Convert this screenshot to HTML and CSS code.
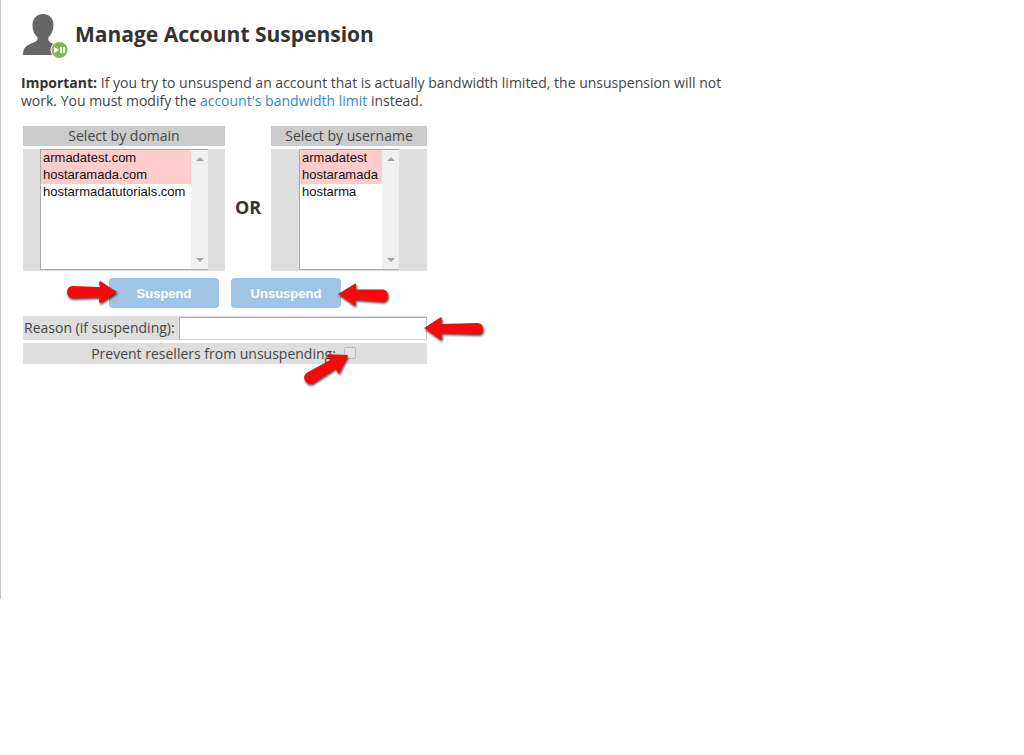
FILE: index.html
```html
<!DOCTYPE html>
<html lang="en">
<head>
  <meta charset="UTF-8">
  <meta name="viewport" content="width=device-width, initial-scale=1.0">
  <title>Manage Account Suspension</title>
  <link rel="stylesheet" href="styles.css">
</head>
<body>
  <main class="content">
    <header class="page-header">
      <svg class="page-icon" width="46" height="46" viewBox="0 0 46 46" aria-hidden="true">
        <path fill="#666" d="M21 1c7 0 11 5 10.500 12-.3 5-2.500 9-5 11.500-.6 3 .5 4.500 3.500 5.700 7 2.800 11 4 11.500 11.800H1c0-8 4-10 10.500-12.500C15 28 16 27 15.500 24.500c-2.800-2.500-4.800-6.500-5-11.500C10.300 6 14 1 21 1z"/>
        <circle cx="37.500" cy="37" r="9" fill="#fff"/>
        <circle cx="37.500" cy="37" r="8" fill="#83b755"/>
        <path fill="#fff" d="M32 34l5 3-5 3zM38 34h2v6h-2zM41 34h2v6h-2z"/>
      </svg>
      <h1>Manage Account Suspension</h1>
    </header>

    <p class="notice"><strong>Important:</strong> If you try to unsuspend an account that is actually bandwidth limited, the unsuspension will not work. You must modify the <a href="#">account's bandwidth limit</a> instead.</p>

    <form class="suspend-form">
      <!-- Account pickers -->
      <div class="pickers">
        <div class="picker picker-domain">
          <label for="domain">Select by domain</label>
          <div class="picker-body">
            <div class="listbox">
              <select id="domain" name="domain" size="7">
                <option class="suspended">armadatest.com</option>
                <option class="suspended">hostaramada.com</option>
                <option>hostarmadatutorials.com</option>
              </select>
              <span class="scroll" aria-hidden="true"></span>
            </div>
          </div>
        </div>
        <strong class="or">OR</strong>
        <div class="picker picker-user">
          <label for="user">Select by username</label>
          <div class="picker-body">
            <div class="listbox">
              <select id="user" name="user" size="7">
                <option class="suspended">armadatest</option>
                <option class="suspended">hostaramada</option>
                <option>hostarma</option>
              </select>
              <span class="scroll" aria-hidden="true"></span>
            </div>
          </div>
        </div>
      </div>

      <div class="actions">
        <button type="button">Suspend</button>
        <button type="button">Unsuspend</button>
      </div>

      <div class="row reason">
        <label for="reason">Reason (if suspending):</label>
        <input type="text" id="reason" name="reason">
      </div>
      <div class="row prevent">
        <label for="prevent">Prevent resellers from unsuspending:</label>
        <input type="checkbox" id="prevent" name="prevent">
      </div>

      <!-- Arrows pointing at the controls -->
      <svg class="arrows" width="470" height="270" viewBox="0 0 470 270" aria-hidden="true">
        <defs>
          <path id="head" d="M0 0L17-11Q19-10 17-5L45-6Q50-5 50 0T45 6L17 5Q19 10 17 11Z"/>
        </defs>
        <use href="#head" transform="translate(94 166) rotate(180)"/>
        <use href="#head" transform="translate(315 168) rotate(2)"/>
        <path d="M401 202L418 191Q420 193 418 198L455 197Q460 198 460 203T455 208L418 207Q420 211 418 214Z"/>
        <use href="#head" transform="translate(325 229) rotate(149)"/>
      </svg>
    </form>
  </main>
</body>
</html>
```
FILE: styles.css
```css
/* General styles */
* {
  box-sizing: border-box;
}

body {
  min-height: 100vh;
  margin: 0;
  background: linear-gradient(#c4c4c4, #c4c4c4) no-repeat 0 0 / 1px 599px #fff;
  color: #444;
  font-family: "Open Sans", sans-serif;
  font-size: 14px;
  line-height: 18px;
}

.content {
  max-width: 748px;
  padding: 13px 21px 40px;
}

.page-header {
  display: flex;
  align-items: center;
  gap: 7px;
  padding-left: 1px;
}

h1 {
  margin: 0 0 4px;
  color: #333;
  font-size: 21px;
  font-weight: 700;
  line-height: 28px;
}

.notice {
  margin: 15px 0 16px;
}

.notice strong {
  color: #333;
}

a {
  color: #2f8bd0;
  text-decoration: none;
}

/* Suspension form */
.suspend-form {
  position: relative;
  width: fit-content;
  margin-left: 2px;
}

.pickers {
  display: flex;
}

.picker {
  display: flex;
  flex-direction: column;
  gap: 3px;
}

.picker-domain {
  width: 202px;
}

.picker-user {
  width: 156px;
}

.picker > label {
  background: #ccc;
  line-height: 20px;
  text-align: center;
}

.picker-body {
  display: flex;
  justify-content: center;
  background: #dedede;
  padding-bottom: 1px;
}

.listbox {
  display: flex;
  height: 121px;
  border: 1px solid #aaa;
  border-right: 0;
  background: #fff;
}

.listbox select {
  width: 150px;
  padding: 0;
  border: 0;
  border-radius: 0;
  outline: 0;
  background: #fff;
  color: #111;
  font: 13px "Liberation Sans", Arial, sans-serif;
  overflow: hidden;
}

.picker-user select {
  width: 82px;
}

option {
  min-height: 17px;
  padding: 0 2px;
  line-height: 17px;
}

.suspended {
  background: #fcc;
}

.scroll {
  display: flex;
  flex-direction: column;
  justify-content: space-between;
  align-items: center;
  width: 17px;
  padding: 7px 0;
  background: #f0f0f0;
}

.scroll::before,
.scroll::after {
  content: "";
  border: 4px solid transparent;
  border-top-width: 0;
  border-bottom-color: #a3a3a3;
}

.scroll::after {
  border-top: 4px solid #a3a3a3;
  border-bottom-width: 0;
}

.or {
  width: 46px;
  align-self: center;
  padding-top: 16px;
  color: #333;
  font-size: 18px;
  text-align: center;
}

.actions {
  display: flex;
  justify-content: center;
  gap: 12px;
  padding: 7px 0 8px;
}

button {
  width: 110px;
  height: 30px;
  border: 0;
  border-radius: 4px;
  background: #a0c4e4;
  color: #fff;
  font: bold 13px "Liberation Sans", Arial, sans-serif;
}

.row {
  display: flex;
  align-items: center;
  background: #dedede;
}

.reason {
  gap: 4px;
  height: 24px;
  margin-bottom: 3px;
  padding-left: 1px;
}

.reason input {
  flex: 1;
  min-width: 0;
  height: 23px;
  border: 1px solid #ccc;
  border-top-color: #aaa;
  border-left-color: #aaa;
  background: #fff;
}

.prevent {
  justify-content: center;
  gap: 8px;
  height: 21px;
  padding-right: 3px;
}

.prevent input {
  appearance: none;
  width: 12px;
  height: 12px;
  margin: 0 0 2px;
  border: 1px solid #bbb;
  border-radius: 2px;
  background: #e2e2e2;
}

.arrows {
  position: absolute;
  top: 0;
  left: 0;
  overflow: visible;
  fill: #f80808;
  filter: drop-shadow(1px 2px 1px rgba(0, 0, 0, 0.7));
  pointer-events: none;
}
```
